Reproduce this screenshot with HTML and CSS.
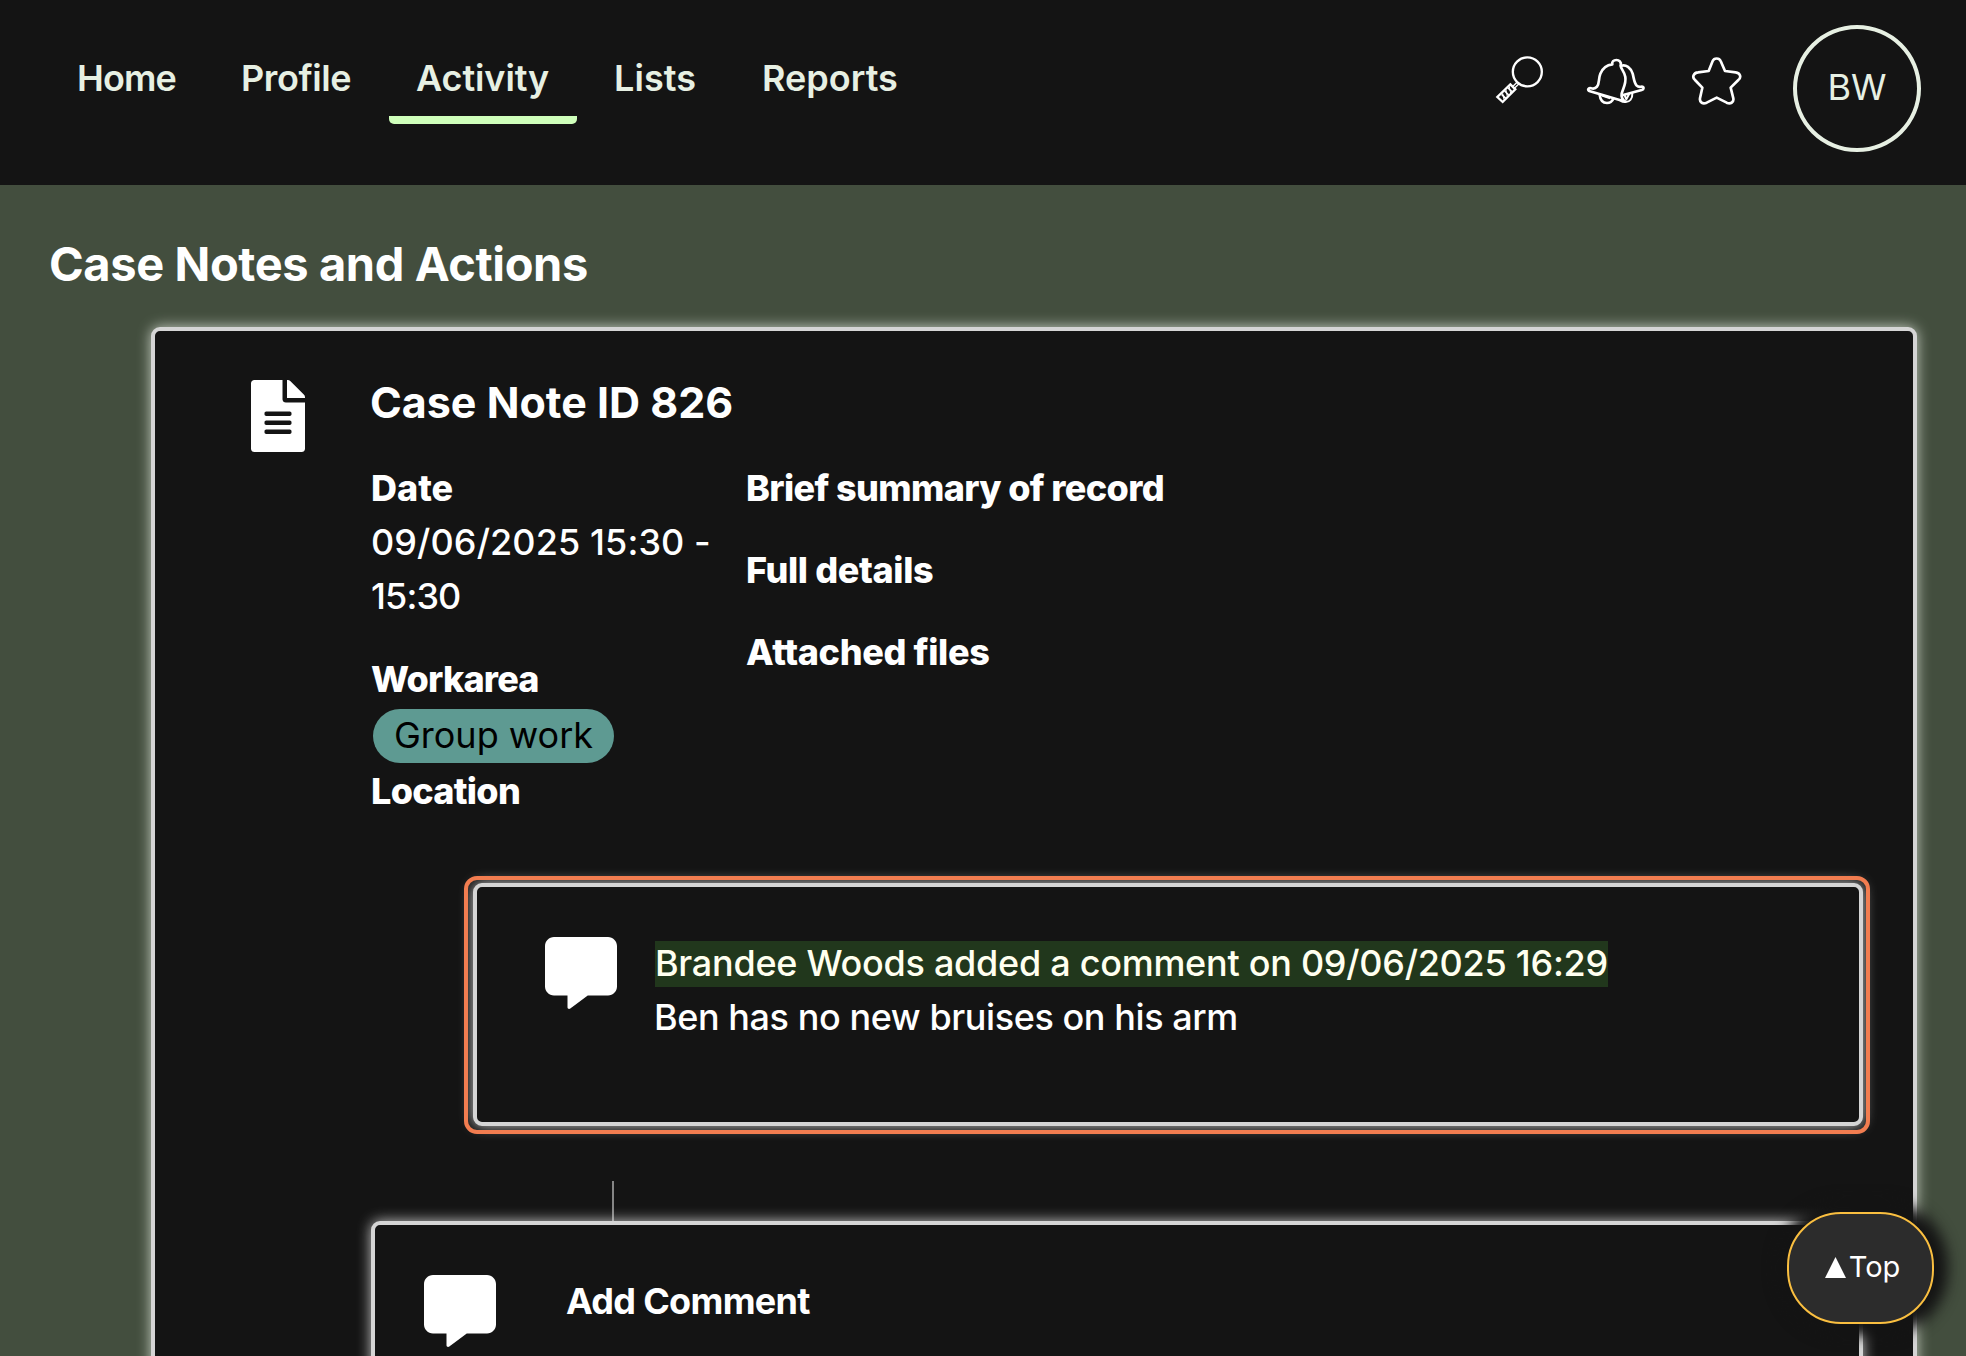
FILE: index.html
```html
<!DOCTYPE html>
<html lang="en">
<head>
<meta charset="utf-8">
<title>Case Notes and Actions</title>
<link rel="stylesheet" href="styles.css">
</head>
<body>
<div class="page">
  <header class="header">
    <nav class="nav">
      <a class="nav-item home">Home</a>
      <a class="nav-item profile">Profile</a>
      <a class="nav-item active">Activity</a>
      <a class="nav-item lists">Lists</a>
      <a class="nav-item reports">Reports</a>
    </nav>
    <div class="actions">
      <svg class="search" viewBox="75 135 147 147" fill="none" stroke="#fff" stroke-width="7">
        <circle cx="172" cy="185.500" r="43.500"/>
        <path d="M142 216 L129 229 M147 221 L134 234" stroke-width="4"/>
        <path d="M121 223 L136 238 L98 276 L82 261 Z" stroke-width="7"/>
        <path d="M114 234 L126 245 M104 243 L116 255 M95 253 L107 265" stroke-width="5"/>
        <path d="M118 230 L122 250 M108 240 L112 260 M98 250 L102 269" stroke-width="3"/>
      </svg>
      <svg class="bell" viewBox="348 140 180 147" fill="none" stroke="#fff" stroke-width="8" stroke-linejoin="round" stroke-linecap="round">
        <path d="M427 162 C425 154 431 149 439 149 C448 149 454 155 452 163 C449 172 463 181 466 200 C469 220 459 235 455 250 C453 260 458 268 466 274 C462 275 455 272 449 269 L360 243 C350 240 355 231 364 234 C371 236 377 234 381 229 C389 219 385 205 391 190 C397 176 410 164 427 162"/>
        <path d="M454 166 C468 162 482 172 488 190 C492 206 493 219 500 226 C505 231 509 230 515 229 C523 229 522 237 515 239 L460 254"/>
        <path d="M389 253 C391 272 402 278 411 278 C420 278 427 272 430 265"/>
        <path d="M398 257 L418 264" stroke-width="5"/>
        <path d="M487 249 C488 264 479 277 466 274 M463 253 L469 267 L477 252" stroke-width="6"/>
      </svg>
      <svg class="star" viewBox="664 138 156 150" fill="none" stroke="#fff" stroke-width="8" stroke-linejoin="round">
        <path d="M729 153 C733 143 749 143 753 153 L766 183 L798 187 C812 189 816 202 806 210 L783 233 L791 265 C793 278 782 283 771 278 L741 263 L711 278 C700 283 689 278 691 265 L698 233 L676 210 C666 202 672 188 685 187 L717 183 Z"/>
      </svg>
      <div class="avatar">BW</div>
    </div>
  </header>

  <main class="main">
    <h1 class="title">Case Notes and Actions</h1>
    <section class="card">
      <svg class="doc-icon" viewBox="0 0 384 512" fill="#fff"><path d="M224 136V0H24C10.700 0 0 10.700 0 24v464c0 13.300 10.700 24 24 24h336c13.300 0 24-10.700 24-24V160H248c-13.200 0-24-10.800-24-24zm64 236c0 6.600-5.400 12-12 12H108c-6.600 0-12-5.400-12-12v-8c0-6.600 5.400-12 12-12h168c6.600 0 12 5.400 12 12v8zm0-64c0 6.600-5.400 12-12 12H108c-6.600 0-12-5.400-12-12v-8c0-6.600 5.400-12 12-12h168c6.600 0 12 5.400 12 12v8zm0-72v8c0 6.600-5.400 12-12 12H108c-6.600 0-12-5.400-12-12v-8c0-6.600 5.400-12 12-12h168c6.600 0 12 5.400 12 12zm96-114.100v6.100H256V0h6.100c6.400 0 12.500 2.500 17 7l97.900 98c4.500 4.500 7 10.600 7 16.900z"/></svg>
      <div class="card-body">
        <h2 class="note-title">Case Note ID 826</h2>
        <div class="details">
          <div class="facts">
            <div class="field"><b>Date</b><span class="date">09/06/2025 15:30 -</span><span class="date end">15:30</span></div>
            <div class="field"><b class="workarea">Workarea</b><span class="chip">Group work</span><b class="location">Location</b></div>
          </div>
          <div class="texts">
            <b class="brief">Brief summary of record</b>
            <b>Full details</b>
            <b>Attached files</b>
          </div>
        </div>
        <article class="comment">
          <svg class="comment-icon" viewBox="0 0 512 512" fill="#fff"><path d="M64 0H448C483 0 512 29 512 64V352C512 387 483 416 448 416H304L180 509C171 515 160 511 160 500V416H64C29 416 0 387 0 352V64C0 29 29 0 64 0Z"/></svg>
          <div>
            <div class="line author"><mark>Brandee Woods added a comment on 09/06/2025 16:29</mark></div>
            <div class="line message">Ben has no new bruises on his arm</div>
          </div>
        </article>
        <div class="connector"></div>
        <section class="add">
          <svg class="comment-icon" viewBox="0 0 512 512" fill="#fff"><path d="M64 0H448C483 0 512 29 512 64V352C512 387 483 416 448 416H304L180 509C171 515 160 511 160 500V416H64C29 416 0 387 0 352V64C0 29 29 0 64 0Z"/></svg>
          <h3 class="add-title">Add Comment</h3>
        </section>
      </div>
    </section>
  </main>
  <a class="top"><svg class="triangle" viewBox="0 0 21 21" fill="#fff"><path d="M10.500 0L21 21H0Z"/></svg>Top</a>
</div>
</body>
</html>
```
FILE: styles.css
```css
* { box-sizing: border-box; }
body {
  margin: 0;
  font: 500 36px/54px Inter, "Liberation Sans", sans-serif;
  color: #fff;
  background: #434e3e;
}
h1, h2, h3 { margin: 0; font-weight: 700; }
b { font-weight: 800; }
svg { display: block; flex: none; }
.page { position: relative; height: 1356px; overflow: hidden; }

.header {
  display: flex;
  justify-content: space-between;
  height: 185px;
  padding: 25px 45px 0 50px;
  background: #141414;
  color: #e7f0e3;
}
.nav { display: flex; padding-top: 26px; }
.nav-item { padding: 0 27px; font-weight: 600; }
.nav-item.home { width: 164px; letter-spacing: -.9px; }
.nav-item.profile { width: 175px; letter-spacing: -.4px; }
.nav-item.active { width: 188px; margin-right: 10px; letter-spacing: -.1px; }
.nav-item.lists { width: 148px; letter-spacing: .1px; }
.nav-item.reports { letter-spacing: 0; }
.nav-item.active::after {
  content: "";
  display: block;
  height: 8px;
  margin: 11px -27px 0;
  border-radius: 0 0 5px 5px;
  background: #cfffbb;
}
.actions { display: flex; align-items: flex-start; }
.search { width: 49px; height: 49px; margin: 30px 42px 0 0; }
.bell { width: 60px; height: 49px; margin: 32px 45px 0 0; }
.star { width: 52px; height: 50px; margin: 31px 50px 0 0; }
.avatar {
  width: 128px;
  height: 127px;
  border: 4px solid #e7f0e3;
  border-radius: 50%;
  font-weight: 400;
  line-height: 117px;
  text-align: center;
}

.main { padding: 49px 49px 0 151px; }
.title { margin: 0 0 33px -102px; font-size: 47px; line-height: 60px; letter-spacing: -.4px; }
.card {
  display: flex;
  gap: 65px;
  height: 1300px;
  padding: 44px 50px 0 96px;
  border: 4px solid #d5d5d5;
  border-radius: 9px;
  background: #141414;
  box-shadow: 0 0 14px rgba(235, 240, 230, .8);
}
.doc-icon { width: 54px; height: 72px; margin-top: 5px; }
.card-body { flex: 1; }
.note-title { margin: 0 0 32px; font-size: 43px; letter-spacing: 0; }
.details { display: flex; margin-left: 1px; height: 357px; }
.facts { width: 375px; }
.facts b, .facts span { display: block; }
.field { margin-bottom: 29px; }
.date { letter-spacing: .1px; white-space: nowrap; }
.date.end { letter-spacing: -.9px; }
.workarea { letter-spacing: -.8px; }
.location { letter-spacing: -.7px; }
.facts .chip {
  width: 241px;
  height: 54px;
  margin: 3px 0 1px 2px;
  border-radius: 27px;
  background: #5e9a92;
  color: #000;
  font-weight: 400;
  line-height: 52px;
  text-align: center;
}
.texts { display: flex; flex-direction: column; gap: 28px; letter-spacing: -.37px; }
.brief { letter-spacing: -.62px; }

.comment, .add {
  position: relative;
  display: flex;
  border: 4px solid #d5d5d5;
  border-radius: 9px;
  background: #141414;
  box-shadow: 0 0 14px rgba(240, 240, 240, .8);
}
.comment { gap: 38px; height: 243px; margin: 65px 0 0 103px; padding: 49px 0 0 68px; }
.comment::after {
  content: "";
  position: absolute;
  inset: -11px -11px -12px -13px;
  border: 4px solid #f27d50;
  border-radius: 13px;
}
.comment-icon { width: 72px; height: 72px; margin-top: 1px; }
.line { white-space: nowrap; }
.author { letter-spacing: -.27px; }
.message { margin-left: -1px; letter-spacing: -.42px; }
mark { padding-bottom: 2px; background: #21371c; color: #fffff0; }
.connector { width: 2px; height: 40px; margin: 55px 0 0 242px; background: #858585; }
.add { gap: 70px; height: 300px; margin-left: 1px; padding: 49px 0 0 49px; }
.add-title { font-size: 36px; letter-spacing: -.7px; }

.top {
  position: absolute;
  left: 1787px;
  top: 1212px;
  display: flex;
  align-items: center;
  justify-content: center;
  gap: 3px;
  width: 147px;
  height: 112px;
  padding: 0 0 2px 4px;
  border: 2px solid #fabf40;
  border-radius: 54px;
  background: #2c2c2c;
  box-shadow: 2px 0 14px 12px #141414;
  font-size: 29px;
  font-weight: 400;
}
.triangle { width: 21px; height: 21px; }
```
